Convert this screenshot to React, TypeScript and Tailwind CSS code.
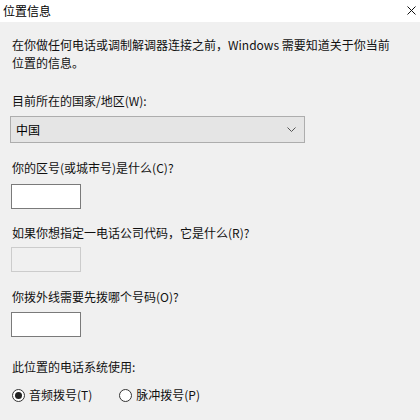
import React from 'react';

const font = "font-['Noto_Sans_CJK_SC','Noto_Sans',sans-serif]";

const Label = ({ text, className = '' }: { text: string; className?: string }) => (
  <div className={`h-[18px] text-[12px] leading-[18px] text-[#111] ${className}`}>{text}</div>
);

const Radio = ({ label, checked }: { label: string; checked?: boolean }) => (
  <label className="flex items-center gap-[4px]">
    <span className="flex h-[13px] w-[13px] items-center justify-center rounded-full border border-[#333] bg-white">
      {checked && <span className="h-[7px] w-[7px] rounded-full bg-[#222]" />}
    </span>
    <span>{label}</span>
  </label>
);

export default function App() {
  return (
    <div className={`h-[420px] w-[420px] overflow-hidden bg-[#f0f0f0] ${font}`}>
      <div className="flex h-[22px] items-center justify-between bg-white pl-[3px] pr-[4px]">
        <span className="text-[12px] leading-[18px] text-black">位置信息</span>
        <svg width="9" height="9" viewBox="0 0 9 9" className="mt-[-2px]">
          <path d="M0.5 0.5 L8.5 8.5 M8.5 0.5 L0.5 8.5" stroke="#111" strokeWidth="1" />
        </svg>
      </div>

      <div className="px-[12px]">
        <div className="mt-[14px] text-[12px] leading-[18px] text-[#111]">
          在你做任何电话或调制解调器连接之前，Windows 需要知道关于你当前
          <br />
          位置的信息。
        </div>

        <Label text="目前所在的国家/地区(W):" className="mt-[20px]" />
        <div className="ml-[-2px] mt-[6px] flex h-[27px] w-[295px] items-center justify-between border border-[#adadad] bg-[#e5e5e5] pl-[5px] pr-[8px] text-[12px]">
          <span>中国</span>
          <svg width="9" height="5" viewBox="0 0 9 5">
            <path d="M0.5 0.5 L4.5 4.5 L8.5 0.5" stroke="#555" strokeWidth="1" fill="none" />
          </svg>
        </div>

        <Label text="你的区号(或城市号)是什么(C)?" className="mt-[16px]" />
        <div className="ml-[-1px] mt-[7px] h-[25px] w-[70px] border border-[#7a7a7a] bg-white" />

        <Label text="如果你想指定一电话公司代码，它是什么(R)?" className="mt-[15px]" />
        <div className="ml-[-1px] mt-[5px] h-[25px] w-[70px] border border-[#cccccc] bg-[#f0f0f0]" />

        <Label text="你拨外线需要先拨哪个号码(O)?" className="mt-[16px]" />
        <div className="ml-[-1px] mt-[6px] h-[25px] w-[70px] border border-[#7a7a7a] bg-white" />

        <Label text="此位置的电话系统使用:" className="mt-[21px]" />
        <div className="mt-[10px] flex items-center gap-[27px] text-[12px] leading-[18px] text-[#111]">
          <Radio label="音频拨号(T)" checked />
          <Radio label="脉冲拨号(P)" />
        </div>
      </div>
    </div>
  );
}
